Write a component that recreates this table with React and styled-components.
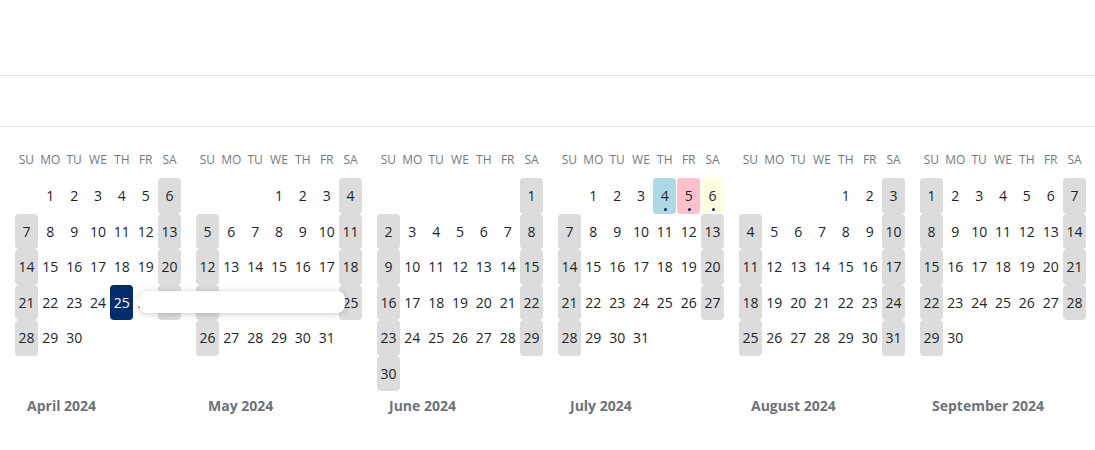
import React from "react";
import styled, { createGlobalStyle } from "styled-components";

const GlobalStyle = createGlobalStyle`
  body {
    margin: 0;
    background: #fff;
    font-family: "Open Sans", "Noto Sans", sans-serif;
    color: #212529;
  }
`;

const WEEKDAYS = ["SU", "MO", "TU", "WE", "TH", "FR", "SA"];
const MONTHS = [
  { name: "April", month: 3 },
  { name: "May", month: 4 },
  { name: "June", month: 5 },
  { name: "July", month: 6 },
  { name: "August", month: 7 },
  { name: "September", month: 8 },
];
const YEAR = 2024;

// colored days with a dot marker
const marked = {
  "6-4": "#add8e6",
  "6-5": "#ffc0cb",
  "6-6": "#ffffe0",
};
const selected = "3-25";

const buildDays = (month) => {
  const offset = new Date(YEAR, month, 1).getDay();
  const count = new Date(YEAR, month + 1, 0).getDate();
  const cells = [];
  for (let i = 0; i < offset; i++) cells.push(null);
  for (let d = 1; d <= count; d++) cells.push(d);
  return cells;
};

const App = () => {
  return (
    <>
      <GlobalStyle />
      <TopBar />
      <Toolbar />
      <Calendar>
        {MONTHS.map((m) => (
          <Month key={m.name}>
            <Weekdays>
              {WEEKDAYS.map((w) => (
                <Weekday key={w}>{w}</Weekday>
              ))}
            </Weekdays>
            <Days>
              {buildDays(m.month).map((d, index) => {
                if (d === null) return <Empty key={`e${index}`} />;
                const key = `${m.month}-${d}`;
                const weekend = index % 7 === 0 || index % 7 === 6;
                const isSelected = key === selected;
                return (
                  <Day
                    key={key}
                    $weekend={weekend}
                    $selected={isSelected}
                    $color={marked[key]}
                  >
                    {d}
                    {marked[key] && <Dot />}
                    {isSelected && <Popover />}
                  </Day>
                );
              })}
            </Days>
            <MonthLabel>
              {m.name} {YEAR}
            </MonthLabel>
          </Month>
        ))}
      </Calendar>
    </>
  );
};

const TopBar = styled.div`
  height: 75px;
  border-bottom: 1px solid #e2e2e8;
`;

const Toolbar = styled.div`
  height: 50px;
  border-bottom: 1px solid #e2e2e8;
`;

const Calendar = styled.div`
  display: grid;
  grid-template-columns: repeat(6, 166px);
  column-gap: 15px;
  padding: 23px 9px 0 15px;
`;

const Month = styled.div`
  display: flex;
  flex-direction: column;
`;

const Weekdays = styled.div`
  display: grid;
  grid-template-columns: repeat(7, 1fr);
  column-gap: 1px;
  height: 20px;
`;

const Weekday = styled.div`
  font-size: 12px;
  line-height: 20px;
  text-align: center;
  color: #737980;
`;

const Days = styled.div`
  display: grid;
  grid-template-columns: repeat(7, 1fr);
  grid-template-rows: repeat(6, 35.5px);
  column-gap: 1px;
  margin-top: 8px;
`;

const Empty = styled.div``;

const Day = styled.div`
  position: relative;
  display: flex;
  align-items: center;
  justify-content: center;
  border-radius: 4px;
  font-size: 14px;
  color: ${(p) => (p.$selected ? "#fff" : "#212529")};
  background: ${(p) =>
    p.$selected ? "#002d6e" : p.$color ? p.$color : p.$weekend ? "#dcdcdc" : "transparent"};
  z-index: ${(p) => (p.$selected ? 2 : "auto")};
`;

const Dot = styled.span`
  position: absolute;
  left: 50%;
  bottom: 3px;
  width: 3px;
  height: 3px;
  margin-left: -1px;
  border-radius: 50%;
  background: #002d6e;
`;

const Popover = styled.div`
  position: absolute;
  left: calc(100% + 6px);
  top: 50%;
  width: 206px;
  height: 22px;
  transform: translateY(-50%);
  background: #fff;
  border-radius: 8px;
  box-shadow: 0 1px 6px rgba(0, 0, 0, 0.22);

  &::before {
    content: "";
    position: absolute;
    left: -5px;
    top: 6px;
    border-top: 5px solid transparent;
    border-bottom: 5px solid transparent;
    border-right: 5px solid #fff;
  }
`;

const MonthLabel = styled.div`
  margin-top: 6px;
  padding-left: 12px;
  font-size: 14px;
  line-height: 18px;
  font-weight: 700;
  color: #6c737a;
`;

export default App;
